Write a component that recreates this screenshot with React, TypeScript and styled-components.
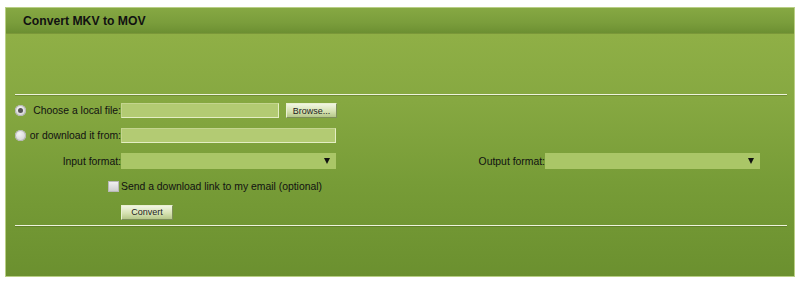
import styled, { createGlobalStyle } from "styled-components";

const GlobalStyle = createGlobalStyle`
  html, body {
    margin: 0;
    padding: 0;
    background: #ffffff;
  }
  body {
    font-family: "Liberation Sans", Arial, sans-serif;
    color: #111;
  }
`;

const Page = styled.div`
  padding: 7px 5px 0 5px;
`;

const Panel = styled.div`
  width: 788px;
  height: 268px;
  border: 1px solid #b9cf86;
  background: linear-gradient(to bottom, #93b248 0%, #86a841 35%, #779c37 65%, #6b902f 100%);
  display: flex;
  flex-direction: column;
`;

const Header = styled.div`
  height: 25px;
  display: flex;
  align-items: center;
  padding-left: 17px;
  background: linear-gradient(to bottom, #86a843 0%, #7a9d3b 60%, #6c8f32 100%);
  box-shadow: 0 1px 0 rgba(60, 80, 20, 0.25);
`;

const Title = styled.h2`
  margin: 0;
  font-size: 12.2px;
  font-weight: bold;
  color: #111;
`;

const Spacer = styled.div<{ $h?: number; $w?: number }>`
  height: ${(p) => p.$h || 0}px;
  width: ${(p) => p.$w || 0}px;
  flex-shrink: 0;
`;

const Rule = styled.div`
  margin: 0 7px 0 9px;
  height: 1px;
  background: #eef3dd;
  box-shadow: 0 1px 0 rgba(70, 90, 30, 0.35);
`;

const Form = styled.div`
  display: grid;
  grid-template-columns: 106px 215px 209px 215px;
  grid-template-rows: 25px 25px 26px 25px 26px;
  padding: 3px 0 0 9px;
  font-size: 10.4px;
`;

const Cell = styled.div<{ $span?: number; $justify?: string }>`
  display: flex;
  align-items: center;
  justify-content: ${(p) => p.$justify || "flex-start"};
  grid-column: span ${(p) => p.$span || 1};
  white-space: nowrap;
`;

const Radio = styled.span<{ $checked?: boolean }>`
  width: 11px;
  height: 11px;
  border-radius: 50%;
  background: radial-gradient(circle at 40% 35%, #f4f4f4, #c9c9c9);
  box-shadow: inset 0 0 0 1px #b5b5b5;
  display: flex;
  align-items: center;
  justify-content: center;
  &::after {
    content: "";
    width: 5px;
    height: 5px;
    border-radius: 50%;
    background: ${(p) => (p.$checked ? "#555" : "transparent")};
  }
`;

const Label = styled.span`
  color: #111;
`;

const TextBox = styled.div<{ $w: number }>`
  width: ${(p) => p.$w}px;
  height: 13px;
  background: #b3cb73;
  border: 1px solid;
  border-color: #c4d58f #e4eec4 #e4eec4 #c4d58f;
`;

const SelectBox = styled.div`
  width: 215px;
  height: 16px;
  background: #aac667;
  display: flex;
  align-items: center;
  justify-content: flex-end;
  padding-right: 6px;
  box-sizing: border-box;
`;

const Arrow = styled.span`
  width: 0;
  height: 0;
  border-left: 3px solid transparent;
  border-right: 3px solid transparent;
  border-top: 6px solid #111;
`;

const Button = styled.button<{ $w: number }>`
  width: ${(p) => p.$w}px;
  height: 15px;
  padding: 0;
  font-family: "Liberation Sans", Arial, sans-serif;
  font-size: 9px;
  color: #222;
  background: linear-gradient(to bottom, #f1f5e2 0%, #d6e2b2 55%, #b5c789 100%);
  border: 1px solid;
  border-color: #e9f0d2 #7d8f5a #7d8f5a #e9f0d2;
  cursor: pointer;
`;

const Check = styled.span`
  width: 9px;
  height: 9px;
  margin-right: 2px;
  background: linear-gradient(to bottom, #f0f0f0, #cfcfcf);
  border: 1px solid #b9b9b9;
`;

export default function App() {
  return (
    <>
      <GlobalStyle />
      <Page>
        <Panel>
          <Header>
            <Title>Convert MKV to MOV</Title>
          </Header>
          <Spacer $h={61} />
          <Rule />
          <Form>
            <Cell $justify="space-between">
              <Radio $checked />
              <Label>Choose a local file:</Label>
            </Cell>
            <Cell $span={3}>
              <TextBox $w={156} />
              <Spacer $w={7} />
              <Button $w={51}>Browse...</Button>
            </Cell>

            <Cell $justify="space-between">
              <Radio />
              <Label>or download it from:</Label>
            </Cell>
            <Cell $span={3}>
              <TextBox $w={213} />
            </Cell>

            <Cell $justify="flex-end">
              <Label>Input format:</Label>
            </Cell>
            <Cell>
              <SelectBox>
                <Arrow />
              </SelectBox>
            </Cell>
            <Cell $justify="flex-end">
              <Label>Output format:</Label>
            </Cell>
            <Cell>
              <SelectBox>
                <Arrow />
              </SelectBox>
            </Cell>

            <Cell $justify="flex-end">
              <Check />
            </Cell>
            <Cell $span={3}>
              <Label>Send a download link to my email (optional)</Label>
            </Cell>

            <Cell />
            <Cell $span={3}>
              <Button $w={52}>Convert</Button>
            </Cell>
          </Form>
          <Rule />
        </Panel>
      </Page>
    </>
  );
}
